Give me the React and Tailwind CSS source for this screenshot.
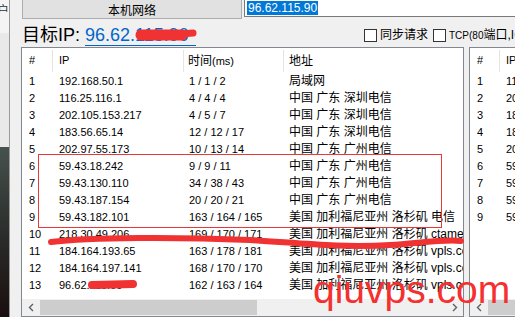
import React from "react";

const rows = [
  ["1", "192.168.50.1", "1 / 1 / 2", "局域网"],
  ["2", "116.25.116.1", "4 / 4 / 4", "中国 广东 深圳电信"],
  ["3", "202.105.153.217", "4 / 5 / 7", "中国 广东 深圳电信"],
  ["4", "183.56.65.14", "12 / 12 / 17", "中国 广东 深圳电信"],
  ["5", "202.97.55.173", "10 / 13 / 14", "中国 广东 广州电信"],
  ["6", "59.43.18.242", "9 / 9 / 11", "中国 广东 广州电信"],
  ["7", "59.43.130.110", "34 / 38 / 43", "中国 广东 广州电信"],
  ["8", "59.43.187.154", "20 / 20 / 21", "中国 广东 广州电信"],
  ["9", "59.43.182.101", "163 / 164 / 165", "美国 加利福尼亚州 洛杉矶 电信"],
  ["10", "218.30.49.206", "169 / 170 / 171", "美国 加利福尼亚州 洛杉矶 ctamerica.com"],
  ["11", "184.164.193.65", "163 / 178 / 181", "美国 加利福尼亚州 洛杉矶 vpls.com"],
  ["12", "184.164.197.141", "168 / 170 / 170", "美国 加利福尼亚州 洛杉矶 vpls.com"],
  ["13", "96.62.115.90", "162 / 163 / 164", "美国 加利福尼亚州 洛杉矶 vpls.com"],
];

const rightRows = [
  ["1", "116.25.116.1"],
  ["2", "202.105.153.217"],
  ["3", "183.56.65.14"],
  ["4", "183.56.65.6"],
  ["5", "202.97.55.173"],
  ["6", "59.43.18.242"],
  ["7", "59.43.130.110"],
  ["8", "59.43.187.154"],
  ["9", "59.43.182.101"],
];

function Chevron({ dir }) {
  return (
    <svg width="6" height="9" viewBox="0 0 6 9">
      <polyline
        points={dir === "left" ? "5,1 1.5,4.5 5,8" : "1,1 4.5,4.5 1,8"}
        fill="none"
        stroke="#606060"
        strokeWidth="1.4"
      />
    </svg>
  );
}

function HScroll({ thumbClass, right }) {
  return (
    <div className="h-[17px] flex bg-[#f0f0f0] shrink-0">
      <div className="w-[18px] flex items-center justify-center">
        <Chevron dir="left" />
      </div>
      <div className="flex-1 py-px flex">
        <div className={"h-full bg-[#cdcdcd] " + thumbClass}></div>
      </div>
      {right && (
        <div className="w-[17px] flex items-center justify-center">
          <Chevron dir="right" />
        </div>
      )}
    </div>
  );
}

function Sep() {
  return <div className="w-px h-[22px] bg-[#e5e5e5] shrink-0"></div>;
}

function MainTable() {
  return (
    <div className="w-[443px] shrink-0 border border-[#828790] bg-white flex flex-col">
      <div className="h-[25px] flex items-center shrink-0 text-[11px] text-black">
        <div className="w-[30px] pl-[7px]">#</div>
        <Sep />
        <div className="w-[130px] pl-[6px]">IP</div>
        <Sep />
        <div className="w-[99px] pl-[4px] whitespace-nowrap">
          <span className="text-[12px]">时间</span>(ms)
        </div>
        <Sep />
        <div className="flex-1 pl-[5px] text-[12px]">地址</div>
      </div>
      {rows.map((r) => (
        <div key={r[0]} className="h-[17px] flex leading-[17px] text-black shrink-0">
          <div className="w-[31px] pl-[7px] text-[11px]">{r[0]}</div>
          <div className="w-[131px] pl-[6px] text-[11px]">{r[1]}</div>
          <div className="w-[100px] pl-[5px] text-[11px] whitespace-nowrap overflow-hidden">{r[2]}</div>
          <div className="flex-1 pl-[5px] text-[12px] whitespace-nowrap overflow-hidden">{r[3]}</div>
        </div>
      ))}
      <div className="flex-1"></div>
      <HScroll thumbClass="w-[217px]" right />
    </div>
  );
}

function SideTable() {
  return (
    <div className="w-[200px] shrink-0 border border-[#828790] bg-white flex flex-col">
      <div className="h-[25px] flex items-center shrink-0 text-[11px] text-black">
        <div className="w-[29px] pl-[7px]">#</div>
        <Sep />
        <div className="flex-1 pl-[6px]">IP</div>
      </div>
      {rightRows.map((r) => (
        <div key={r[0]} className="h-[17px] flex leading-[17px] text-[11px] text-black shrink-0">
          <div className="w-[30px] pl-[7px]">{r[0]}</div>
          <div className="flex-1 pl-[6px] whitespace-nowrap">{r[1]}</div>
        </div>
      ))}
      <div className="flex-1"></div>
      <HScroll thumbClass="w-[120px]" />
    </div>
  );
}

export default function App() {
  return (
    <div className="relative w-[515px] h-[317px] overflow-hidden flex bg-[#f0f0f0] font-['Liberation_Sans','Noto_Sans_CJK_SC',sans-serif]">
      {/* other window behind */}
      <div className="w-[9px] shrink-0 flex flex-col">
        <div className="h-[33px] bg-[#f4f4f4] overflow-hidden">
          <div className="-ml-[3px] mt-[4px] text-[12px] leading-[14px] text-[#333]">户</div>
        </div>
        <div className="h-[114px] bg-[#e9e9e9]"></div>
        <div className="flex-1 bg-linear-to-b from-[#46524d] via-[#2b2e2c] to-[#1a0e0e]"></div>
      </div>
      <div className="w-px shrink-0 bg-[#9a9a9a]"></div>

      <div className="flex-1 min-w-0 flex flex-col pl-[11px] overflow-hidden">
        <div className="h-[19px] flex shrink-0">
          <div className="ml-px w-[220px] h-[19px] shrink-0 border-x border-b border-[#adadad] bg-[#e1e1e1] flex items-center justify-center pt-[3px] text-[12px] text-black">
            本机网络
          </div>
          <div className="ml-[2px] w-[300px] shrink-0 h-[17px] border-l border-b border-[#7a7a7a] bg-white pl-[2px] pt-[1px] flex items-start">
            <span className="block bg-[#0078d7] text-white text-[12px] leading-[14px] px-px">96.62.115.90</span>
          </div>
        </div>

        <div className="h-[28px] flex items-center shrink-0 pt-[4px] whitespace-nowrap">
          <div className="ml-px w-[342px] shrink-0 flex items-center">
            <span className="text-[18px] leading-[22px] text-black">目标IP:</span>
            <span className="ml-[5px] inline-block w-[111px] text-[18px] leading-[20px] text-[#0066cc] border-b border-[#0066cc] overflow-hidden">
              96.62.115.90
            </span>
          </div>
          <div className="w-[13px] h-[13px] shrink-0 border border-[#333] bg-white"></div>
          <span className="ml-[3px] text-[12px] text-black">同步请求</span>
          <div className="ml-[5px] w-[13px] h-[13px] shrink-0 border border-[#333] bg-white"></div>
          <span className="ml-[3px] text-[12px] text-black">
            <span className="text-[10px]">TCP(80</span>端口,ICMP)
          </span>
        </div>

        <div className="flex-1 flex gap-[5px] min-h-0">
          <MainTable />
          <SideTable />
        </div>
      </div>

      {/* annotations drawn over the screenshot */}
      <div className="absolute left-[38px] top-[154px] w-[404px] h-[74px] border border-[#e8383a] pointer-events-none"></div>
      <svg className="absolute inset-0 pointer-events-none" width="515" height="317" viewBox="0 0 515 317">
        <g fill="none" stroke="#f03232" strokeLinecap="round" strokeLinejoin="round">
          <path d="M141 35 L182 35" strokeWidth="11" />
          <path d="M180 34 L193 33" strokeWidth="7" />
          <path d="M51 242 C 90 237, 180 237, 250 240 C 300 243, 340 248, 390 245 C 420 243, 445 239, 461 241" strokeWidth="6" />
          <path d="M92 285 L133 284" strokeWidth="8" />
        </g>
      </svg>
      <div className="absolute left-[313px] top-[270px] text-[39px] leading-none text-[#f5302f] font-['Liberation_Sans',sans-serif] pointer-events-none">
        qiuvps.com
      </div>
    </div>
  );
}
